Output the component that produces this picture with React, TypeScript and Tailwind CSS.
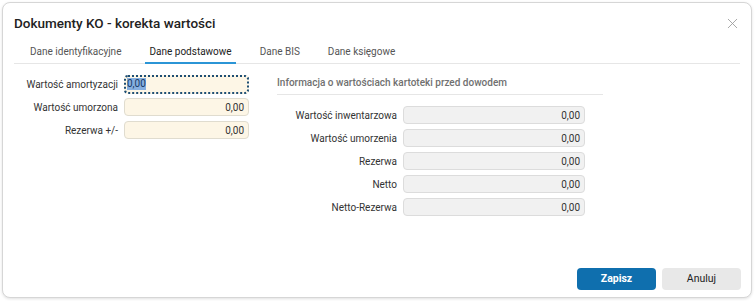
import { X } from "lucide-react";

const tabs = ["Dane identyfikacyjne", "Dane podstawowe", "Dane BIS", "Dane księgowe"];

const leftRows = [
  { label: "Wartość umorzona", value: "0,00" },
  { label: "Rezerwa +/-", value: "0,00" },
];

const rightRows = [
  { label: "Wartość inwentarzowa", value: "0,00" },
  { label: "Wartość umorzenia", value: "0,00" },
  { label: "Rezerwa", value: "0,00" },
  { label: "Netto", value: "0,00" },
  { label: "Netto-Rezerwa", value: "0,00" },
];

export default function App() {
  return (
    <div
      className="w-[756px] h-[301px] bg-white p-[2px] text-[#333]"
      style={{ fontFamily: "Roboto, 'Liberation Sans', sans-serif" }}
    >
      <div className="flex flex-col w-[750px] h-[296px] bg-white border border-[#d6d6d6] rounded-[8px] shadow-[0_1px_3px_rgba(0,0,0,0.12)]">
        {/* header */}
        <div className="flex items-center justify-between pl-[11px] pr-[10px] pt-[12px]">
          <h1 className="text-[13.5px] leading-[17px] font-medium text-[#222]">
            Dokumenty KO - korekta wartości
          </h1>
          <X size={17} strokeWidth={1.2} className="text-[#999]" />
        </div>

        {/* tabs */}
        <div className="mx-[11px] mt-[13px] flex border-b border-[#e6e6e6] pl-[12px] gap-[20px]">
          {tabs.map((t, i) => (
            <div
              key={t}
              className={
                i === 1
                  ? "px-[4px] pb-[3px] text-[10px] leading-[14px] text-[#222] border-b-2 border-[#2b95d6] -mb-px"
                  : "px-[4px] pb-[3px] text-[10px] leading-[14px] text-[#555] border-b-2 border-transparent -mb-px"
              }
            >
              {t}
            </div>
          ))}
        </div>

        {/* body */}
        <div className="flex flex-1 pt-[11px]">
          <div className="flex flex-col gap-[5px] w-[250px]">
            <div className="flex items-center h-[18px]">
              <span className="w-[121px] text-right text-[10px] pr-[6px]">Wartość amortyzacji</span>
              <div className="flex items-center w-[125px] h-[19px] rounded-[4px] border-2 border-dotted border-[#1d4e74] bg-[#fdf6e6] px-[1px]">
                <span className="bg-[#86afe0] text-[#163a66] text-[10px] leading-[12px]">0,00</span>
              </div>
            </div>
            {leftRows.map((r) => (
              <div key={r.label} className="flex items-center h-[18px]">
                <span className="w-[121px] text-right text-[10px] pr-[6px]">{r.label}</span>
                <div className="flex items-center justify-end w-[125px] h-[18px] rounded-[4px] border border-[#e0dccf] bg-[#fdf6e6] px-[4px] text-[10px]">
                  {r.value}
                </div>
              </div>
            ))}
          </div>

          <div className="ml-[24px] flex flex-col">
            <div className="w-[326px] border-b border-[#e6e6e6] pb-[4px] pt-px text-[10px] leading-[14px] font-medium text-[#707070]">
              Informacja o wartościach kartoteki przed dowodem
            </div>
            <div className="flex flex-col gap-[5px] mt-[11px]">
              {rightRows.map((r) => (
                <div key={r.label} className="flex items-center h-[18px]">
                  <span className="w-[126px] text-right text-[10px] pr-[6px]">{r.label}</span>
                  <div className="flex items-center justify-end w-[182px] h-[18px] rounded-[4px] border border-[#dcdcdc] bg-[#f1f1f1] px-[4px] text-[10px]">
                    {r.value}
                  </div>
                </div>
              ))}
            </div>
          </div>
        </div>

        {/* footer */}
        <div className="flex justify-end gap-[6px] pr-[10px] pb-[7px]">
          <button className="w-[79px] h-[22px] rounded-[4px] bg-[#0f6fae] text-white text-[10.5px] font-bold">
            Zapisz
          </button>
          <button className="w-[79px] h-[22px] rounded-[4px] bg-[#e8e8e8] text-[#222] text-[10.5px]">
            Anuluj
          </button>
        </div>
      </div>
    </div>
  );
}
